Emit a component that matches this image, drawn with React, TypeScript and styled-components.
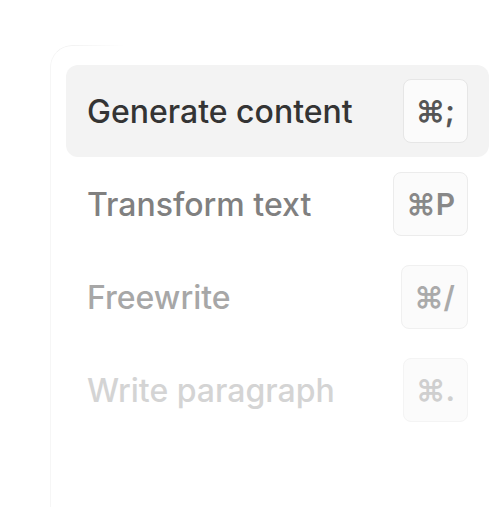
import React from 'react';
import styled, { createGlobalStyle } from 'styled-components';

const Global = createGlobalStyle`
  html, body {
    margin: 0;
    padding: 0;
    background: #ffffff;
  }
  body {
    font-family: Inter, "Noto Sans", sans-serif;
  }
`;

type ItemType = {
  label: string
  keys: string
  tone: number
  active?: boolean
}

const items: ItemType[] = [
  { label: 'Generate content', keys: '⌘;', tone: 0, active: true },
  { label: 'Transform text', keys: '⌘P', tone: 1 },
  { label: 'Freewrite', keys: '⌘/', tone: 2 },
  { label: 'Write paragraph', keys: '⌘.', tone: 3 },
];

const labelColors = ['#343434', '#808080', '#a7a7a7', '#d4d4d4'];
const keyColors = ['#555555', '#888888', '#aaaaaa', '#cfcfcf'];
const keyBorders = ['#e6e6e6', '#ececec', '#f0f0f0', '#f4f4f4'];

export default function App() {
  return (
    <>
      <Global />
      <Page>
        <Card>
          <List>
            {items.map((item) => (
              <Row key={item.label} $active={item.active}>
                <Label $tone={item.tone}>{item.label}</Label>
                <Key $tone={item.tone}>{item.keys}</Key>
              </Row>
            ))}
          </List>
        </Card>
      </Page>
    </>
  );
}

const Page = styled.div`
  width: 500px;
  height: 507px;
  overflow: hidden;
  padding: 45px 0 0 50px;
  box-sizing: border-box;
`;

const Card = styled.div`
  position: relative;
  width: 470px;
  height: 480px;
  padding: 20px 16px;
  box-sizing: border-box;

  &::before {
    content: '';
    position: absolute;
    inset: 0;
    border-top: 1px solid #f2f2f2;
    border-left: 1px solid #f6f6f6;
    border-top-left-radius: 22px;
    -webkit-mask-image: linear-gradient(to right, #000 0, #000 18px, transparent 75px);
    mask-image: linear-gradient(to right, #000 0, #000 18px, transparent 75px);
    pointer-events: none;
  }
`;

const List = styled.div`
  display: flex;
  flex-direction: column;
  gap: 1px;
  width: 423px;
`;

const Row = styled.div<{ $active?: boolean }>`
  height: 92px;
  display: flex;
  align-items: center;
  justify-content: space-between;
  padding: 0 21px;
  border-radius: 12px;
  background: ${(p) => (p.$active ? '#f3f3f3' : 'transparent')};
`;

const Label = styled.span<{ $tone: number }>`
  font-size: 32px;
  font-weight: 500;
  color: ${(p) => labelColors[p.$tone]};
`;

const Key = styled.span<{ $tone: number }>`
  min-width: 64px;
  height: 64px;
  box-sizing: border-box;
  padding: 0 12px;
  display: flex;
  align-items: center;
  justify-content: center;
  border: 1.5px solid ${(p) => keyBorders[p.$tone]};
  border-radius: 8px;
  background: #fbfbfb;
  font-family: Inter, "DejaVu Sans", sans-serif;
  font-size: 30px;
  font-weight: 600;
  color: ${(p) => keyColors[p.$tone]};
`;
